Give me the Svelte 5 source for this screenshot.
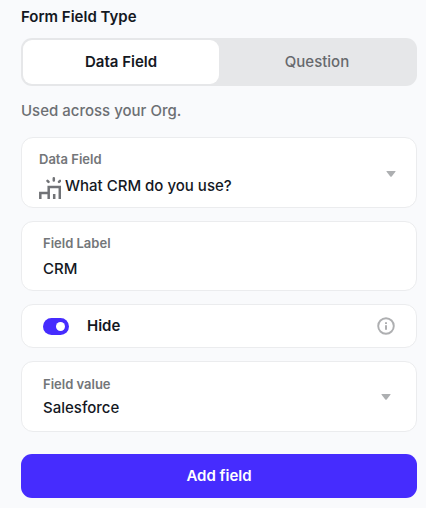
<script lang="ts">
    let fieldType = $state("data");
    let dataField = $state("What CRM do you use?");
    let fieldLabel = $state("CRM");
    let hidden = $state(true);
    let fieldValue = $state("Salesforce");

    const types = [
        { id: "data", name: "Data Field" },
        { id: "question", name: "Question" },
    ];

    const addField = (e: SubmitEvent) => {
        e.preventDefault();
    };
</script>

{#snippet caret()}
    <svg class="caret" width="10" height="6" viewBox="0 0 10 6" aria-hidden="true">
        <path d="M1 0h8q1 0 .4.8L5.7 5.4q-.7.8-1.4 0L.6.8Q0 0 1 0z" fill="currentColor" />
    </svg>
{/snippet}

<form onsubmit={addField}>
    <h1>Form Field Type</h1>

    <div class="segmented">
        {#each types as type}
            <button
                type="button"
                class:active={fieldType === type.id}
                aria-pressed={fieldType === type.id}
                onclick={() => (fieldType = type.id)}>{type.name}</button
            >
        {/each}
    </div>

    <p>Used across your Org.</p>

    <div class="cards">
        <div class="card with-icon">
            <div class="field">
                <label for="data-field">Data Field</label>
                <div class="value">
                    <svg width="22" height="22" viewBox="0 0 22 22" fill="none" stroke="currentColor" stroke-width="2.5" aria-hidden="true">
                        <path d="M1.3 22v-6h8.4M9.7 22V10H20.8V22M15.2 17V22" />
                        <path d="M14.8 1.3v2.2M8.5 3.8l1 1M21 3.8l-1 1" stroke-linecap="round" />
                    </svg>
                    <select id="data-field" bind:value={dataField}>
                        <option>What CRM do you use?</option>
                    </select>
                </div>
            </div>
            {@render caret()}
        </div>

        <div class="card">
            <div class="field">
                <label for="field-label">Field Label</label>
                <input id="field-label" type="text" bind:value={fieldLabel} />
            </div>
        </div>

        <div class="card toggle">
            <label>
                <input type="checkbox" role="switch" bind:checked={hidden} />
                Hide
            </label>
            <button type="button" class="info" aria-label="About hiding">
                <svg width="18" height="18" viewBox="0 0 18 18" fill="none" stroke="currentColor" aria-hidden="true">
                    <circle cx="9" cy="9" r="7.8" stroke-width="1.9" />
                    <path d="M9 8.2v4.6M9 5.2v1.8" stroke-width="2" />
                </svg>
            </button>
        </div>

        <div class="card picker">
            <div class="field">
                <label for="field-value">Field value</label>
                <select id="field-value" bind:value={fieldValue}>
                    <option>Salesforce</option>
                </select>
            </div>
            {@render caret()}
        </div>
    </div>

    <button class="submit">Add field</button>
</form>

<style>
    :global(body) {
        background: #f9fafc;
    }

    form {
        padding: 7px 9px 10px 21px;
        font-family: Inter, "Liberation Sans", sans-serif;
        font-size: 15px;
        font-optical-sizing: none;
        font-weight: 500;
        line-height: 20px;
        color: #14181f;
    }

    h1 {
        margin: 0 0 11px;
        font-size: 15px;
        font-weight: 600;
        line-height: 20px;
    }

    p {
        margin: 15px 0 16px;
        color: #6c6f73;
    }

    button,
    input,
    select {
        box-sizing: border-box;
        margin: 0;
        padding: 0;
        border: none;
        background: none;
        font: inherit;
        font-optical-sizing: inherit;
        color: inherit;
    }

    button {
        cursor: pointer;
    }

    .segmented {
        display: flex;
        padding: 2px;
        border-radius: 11px;
        background: #e6e7e9;

        & button {
            flex: 1;
            height: 44px;
            border-radius: 9px;
            color: #66696d;
        }

        & .active {
            background: white;
            font-weight: 600;
            color: #14181f;
        }
    }

    .cards {
        display: flex;
        flex-direction: column;
        gap: 13px;
    }

    .card {
        display: flex;
        align-items: center;
        padding: 11px 21px 10px;
        border: 1px solid #ebecee;
        border-radius: 12px;
        background: white;
    }

    .field {
        display: flex;
        flex-direction: column;
        flex: 1;
        min-width: 0;
        gap: 3px;

        & label {
            font-size: 13px;
            font-weight: 600;
            color: #737679;
        }

        & input,
        & select {
            appearance: none;
            width: 100%;
            height: 24px;
            outline: none;
        }
    }

    .with-icon {
        padding: 11px 20px 8px 17px;

        & .field {
            gap: 5px;
        }
    }

    .picker {
        padding: 12px 25px 11px 21px;

        & .field {
            gap: 2px;
        }
    }

    .value {
        display: flex;
        gap: 4px;

        & svg {
            flex: none;
            margin-top: 3px;
            color: #717377;
        }
    }

    .caret {
        flex: none;
        color: #adafb1;
    }

    .toggle {
        justify-content: space-between;
        padding: 11px 21px;

        & label {
            display: flex;
            align-items: center;
            gap: 18px;
            font-weight: 600;
        }

        & input {
            appearance: none;
            width: 26px;
            height: 17px;
            border-radius: 9px;
            background: #c4c6ca;
            cursor: pointer;

            &::before {
                content: "";
                display: block;
                width: 9px;
                height: 9px;
                margin: 4px;
                border-radius: 50%;
                background: white;
            }

            &:checked {
                background: #462cfe;
            }

            &:checked::before {
                margin-left: 13px;
            }
        }
    }

    .info {
        display: flex;
        color: #aeafb1;
    }

    .submit {
        width: 100%;
        height: 44px;
        margin-top: 22px;
        border-radius: 11px;
        background: #462cfe;
        font-weight: 600;
        color: white;
    }
</style>
